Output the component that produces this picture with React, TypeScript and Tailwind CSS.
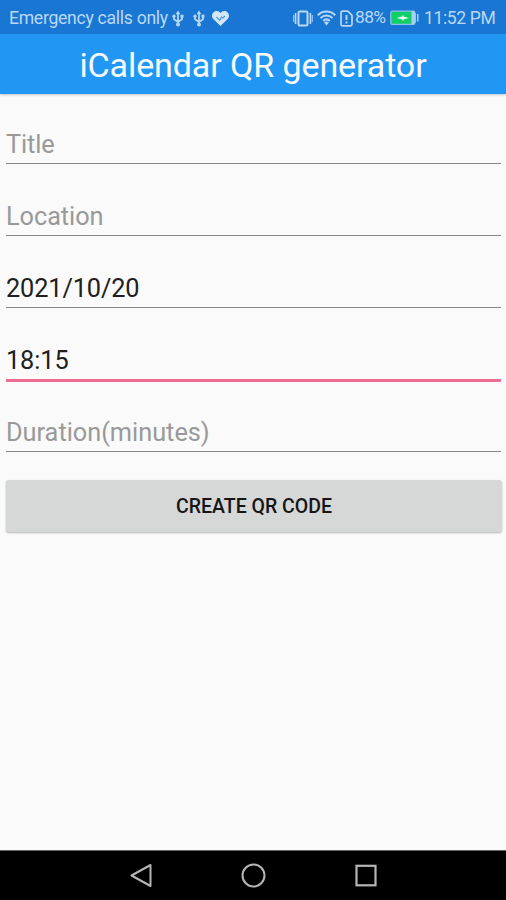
import React from 'react';

function UsbIcon() {
  return (
    <svg className="h-[17px] w-[12px] shrink-0" viewBox="0 0 12 17" fill="none" stroke="currentColor" strokeWidth="1.7">
      <path d="M6 2v13M2 6v3.2L6 12M10 6v3.2L6 12" />
      <path d="M6 .5 3.6 4.2h4.8z" fill="currentColor" stroke="none" />
      <circle cx="2" cy="6.2" r="1.6" fill="currentColor" stroke="none" />
      <path d="M8.5 4.7h3v3h-3z" fill="currentColor" stroke="none" />
      <circle cx="6" cy="14.4" r="2" fill="currentColor" stroke="none" />
    </svg>
  );
}

function StatusBar() {
  return (
    <header className="flex h-[34px] shrink-0 items-center bg-[#1976d2] pl-[9px] pt-[2px] text-[17.6px] leading-[20px] text-[#b9d8f7]">
      <span className="w-[163px] shrink-0 whitespace-nowrap tracking-[-0.28px]">Emergency calls only</span>
      <UsbIcon />
      <span className="w-[9px] shrink-0" />
      <UsbIcon />
      <svg className="ml-[7px] h-[15px] w-[17px] shrink-0" viewBox="0 0 17 15">
        <path d="M8.5 15 1.6 8.3C-2 4.5 1.2 0 4.8 0c1.6 0 2.8.8 3.7 2 .9-1.2 2.1-2 3.7-2 3.6 0 6.8 4.5 3.2 8.3z" fill="#d3e7fa" />
        <path d="m4.5 6 3.2 3.3L9.5 6l1.5 1 2-2" fill="none" stroke="#4f97df" strokeWidth="1.2" />
      </svg>
      <svg className="ml-[64px] h-[17px] w-[20px] shrink-0" viewBox="0 0 20 17" fill="none" stroke="currentColor">
        <rect x="5.5" y="1.4" width="9" height="14.2" rx="1.3" strokeWidth="2" />
        <path d="M2.6 3v11M17.4 3v11" strokeWidth="1.6" />
        <path d="M.8 5v7M19.2 5v7" strokeWidth="1" />
      </svg>
      <svg className="ml-[4px] h-[16px] w-[19px] shrink-0" viewBox="0 0 19 16" fill="none" stroke="currentColor" strokeWidth="2">
        <path d="M.8 5.2C5.6.2 13.4.2 18.2 5.2M3.5 8.1c3.5-3.5 8.5-3.5 12 0M6.2 11c2-2 4.6-2 6.6 0" />
        <path d="m9.5 15.5-2.4-3q2.4-1.8 4.8 0z" fill="currentColor" stroke="none" />
      </svg>
      <svg className="ml-[4px] h-[17px] w-[13px] shrink-0" viewBox="0 0 13 17" fill="none" stroke="currentColor" strokeWidth="1.7">
        <path d="M1 3Q1 1.2 2.8 1.2h5L12 5.3v8.9q0 1.6-1.6 1.6H2.6Q1 15.8 1 14.2z" />
        <path d="M6.5 5v5M6.5 11.5v2" strokeWidth="1.9" />
      </svg>
      <span className="ml-[2px] w-[35px] shrink-0 -translate-y-px whitespace-nowrap text-[17.4px] tracking-[-0.6px]">88%</span>
      <svg className="h-[16px] w-[29px] shrink-0" viewBox="0 0 29 16">
        <rect x=".8" y="1.2" width="24" height="13.2" rx="1.5" fill="#10cf68" stroke="#8ec0ed" strokeWidth="1.3" />
        <path d="M21.5 1v13.6h1.8l2.5-2.6V3.6L23.3 1zM27 4h1.5v7.6H27z" fill="#a9cff4" />
        <path d="M6.5 8 12 6.6 13 5l1.3 1.7L19 8l-4.8 1.3L13 11l-1.2-1.7z" fill="#e1fff0" />
      </svg>
      <span className="ml-[5px] whitespace-nowrap tracking-[-0.4px]">11:52 PM</span>
    </header>
  );
}

type FieldProps = { text: string; hint?: boolean; focused?: boolean; spacing: string };

function Field({ text, hint, focused, spacing }: FieldProps) {
  return (
    <div className="flex h-[72px] shrink-0 flex-col pl-[6px] pr-[5px]">
      <div className={`h-[69px] shrink-0 whitespace-nowrap pt-[35px] text-[25.3px] leading-[32px] ${spacing} ${hint ? 'text-[#999999]' : 'text-[#202020]'}`}>
        {text}
      </div>
      <div className={focused ? 'h-[3px] shrink-0 bg-[#f06c94]' : 'h-px shrink-0 bg-[#858585]'} />
    </div>
  );
}

export default function App() {
  return (
    <div className="flex h-[900px] w-[506px] flex-col overflow-hidden bg-[#fafafa] font-[Roboto,sans-serif]">
      <StatusBar />
      <div className="z-10 flex h-[60px] shrink-0 items-center justify-center bg-[#2196f3] pt-px text-[34px] leading-[40px] text-[#f7fbff] shadow-[0_1px_2px_rgba(0,0,0,0.22)]">
        <h1 className="whitespace-nowrap tracking-[-0.1px]">iCalendar QR generator</h1>
      </div>
      <main className="flex min-h-0 flex-1 flex-col">
        <Field text="Title" hint spacing="tracking-[-0.1px]" />
        <Field text="Location" hint spacing="tracking-[-0.05px]" />
        <Field text="2021/10/20" spacing="tracking-[-0.12px]" />
        <Field text="18:15" focused spacing="tracking-[-0.1px]" />
        <Field text="Duration(minutes)" hint spacing="tracking-normal" />
        <button className="ml-[6px] mr-[4px] mt-[26px] h-[52px] shrink-0 rounded-[3px] bg-[#d6d8d7] pt-px text-[19.5px] font-medium text-[#151515] shadow-[0_1px_2px_rgba(0,0,0,0.28)]">
          CREATE QR CODE
        </button>
      </main>
      <nav className="flex h-[50px] shrink-0 items-center border-t border-[#656565] bg-black pl-[130px] text-[#b5b5b5]">
        <svg className="h-[26px] w-[24px]" viewBox="0 0 24 26" fill="none" stroke="currentColor" strokeWidth="2" strokeLinejoin="round">
          <path d="M20.5 2v21L1.5 12.5z" />
        </svg>
        <svg className="ml-[86px] h-[26px] w-[26px]" viewBox="0 0 26 26" fill="none" stroke="currentColor" strokeWidth="2">
          <circle cx="13.5" cy="12.5" r="11" />
        </svg>
        <svg className="ml-[88px] h-[26px] w-[24px]" viewBox="0 0 24 26" fill="none" stroke="currentColor" strokeWidth="2.2">
          <rect x="2.5" y="2.8" width="19" height="19.5" />
        </svg>
      </nav>
    </div>
  );
}
